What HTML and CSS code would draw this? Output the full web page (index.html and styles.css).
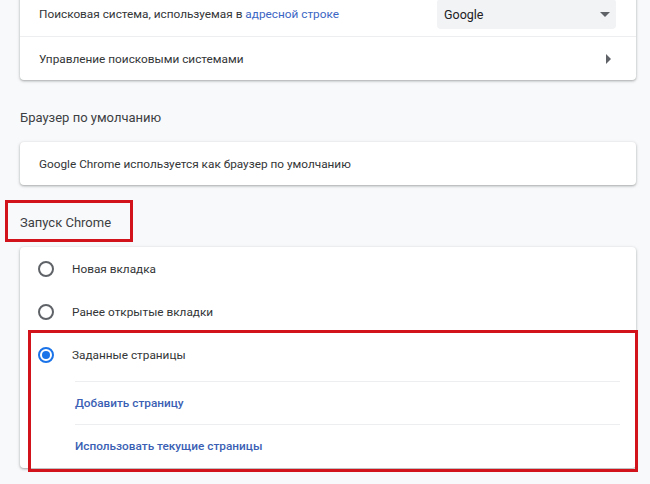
FILE: index.html
```html
<!DOCTYPE html>
<html lang="ru">
<head>
<meta charset="utf-8">
<title>Настройки</title>
<link rel="stylesheet" href="styles.css">
</head>
<body>
<div class="page">
  <div class="card card-first">
    <div class="row">
      <span class="label">Поисковая система, используемая в <a class="link" href="#">адресной строке</a></span>
      <div class="select">
        <span>Google</span>
        <svg class="caret" width="10" height="5" viewBox="0 0 10 5"><path d="M0 0h10L5 5z" fill="#5f6368"/></svg>
      </div>
    </div>
    <div class="row row-border">
      <span class="label">Управление поисковыми системами</span>
      <svg class="arrow" width="5" height="10" viewBox="0 0 5 10"><path d="M0 0l5 5-5 5z" fill="#5f6368"/></svg>
    </div>
  </div>

  <h2 class="section-title">Браузер по умолчанию</h2>
  <div class="card">
    <div class="row row-short">
      <span class="label">Google Chrome используется как браузер по умолчанию</span>
    </div>
  </div>

  <h2 class="section-title title-marked">Запуск Chrome</h2>
  <div class="card card-startup">
    <div class="radio-row">
      <span class="radio"></span>
      <span class="label">Новая вкладка</span>
    </div>
    <div class="radio-row">
      <span class="radio"></span>
      <span class="label">Ранее открытые вкладки</span>
    </div>
    <div class="radio-row">
      <span class="radio radio-on"></span>
      <span class="label">Заданные страницы</span>
    </div>
    <div class="pages">
      <div class="page-row"><a class="action" href="#">Добавить страницу</a></div>
      <div class="page-row"><a class="action" href="#">Использовать текущие страницы</a></div>
    </div>
    <div class="mark mark-pages"></div>
  </div>
</div>
</body>
</html>
```

FILE: styles.css
```css
*, *::before, *::after { box-sizing: border-box; }
html, body { margin: 0; padding: 0; }
body {
  background: #f8f9fa;
  font-family: Roboto, "Noto Sans", "Liberation Sans", sans-serif;
  font-size: 11.8px;
  color: #202124;
  min-height: 484px;
}
.page {
  width: 616px;
  margin-left: 20px;
  padding-bottom: 20px;
}
.card {
  position: relative;
  background: #fff;
  border-radius: 4px;
  box-shadow: 0 1px 2px rgba(60,64,67,0.3), 0 1px 3px 1px rgba(60,64,67,0.12);
}
.card-first {
  margin-top: -8px;
  border-radius: 0 0 4px 4px;
}
.row {
  display: flex;
  align-items: center;
  justify-content: space-between;
  height: 44px;
  padding: 0 20px 0 19px;
}
.row-short { height: 43px; }
.row-border { border-top: 1px solid #eceef0; }
.label { line-height: 20px; color: #333537; }
.link { color: #3b66c4; text-decoration: none; }
.select {
  width: 179px;
  height: 30px;
  background: #f1f3f4;
  border-radius: 4px;
  display: flex;
  align-items: center;
  justify-content: space-between;
  padding: 0 6px 0 7px;
  color: #202124;
  font-size: 12.5px;
}
.arrow { margin-right: 5px; }
.section-title {
  margin: 0;
  padding: 28px 0 14px 0;
  font-size: 13px;
  font-weight: 400;
  line-height: 20px;
  color: #3c4043;
}
.title-marked { position: relative; }
.title-marked::after {
  content: "";
  position: absolute;
  left: -15px;
  top: 15px;
  width: 128px;
  height: 42px;
  border: 3px solid #d2131b;
}
.card-startup { padding-bottom: 1px; }
.radio-row {
  display: flex;
  align-items: center;
  height: 43px;
  padding-left: 18px;
}
.radio {
  width: 16px;
  height: 16px;
  border: 2px solid #5f6368;
  border-radius: 50%;
  margin-right: 18px;
  position: relative;
  flex: none;
}
.radio-on { border-color: #1a73e8; }
.radio-on::after {
  content: "";
  position: absolute;
  left: 2px;
  top: 2px;
  width: 8px;
  height: 8px;
  border-radius: 50%;
  background: #1a73e8;
}
.pages {
  margin: 5px 16px 0 55px;
}
.page-row {
  height: 43px;
  display: flex;
  align-items: center;
  border-top: 1px solid #eceef0;
}
.action {
  color: #3b5fb4;
  font-weight: 500;
  text-decoration: none;
  line-height: 20px;
}
.mark-pages {
  position: absolute;
  left: 8px;
  top: 83px;
  width: 610px;
  height: 142px;
  border: 3px solid #d2131b;
  pointer-events: none;
}
```
